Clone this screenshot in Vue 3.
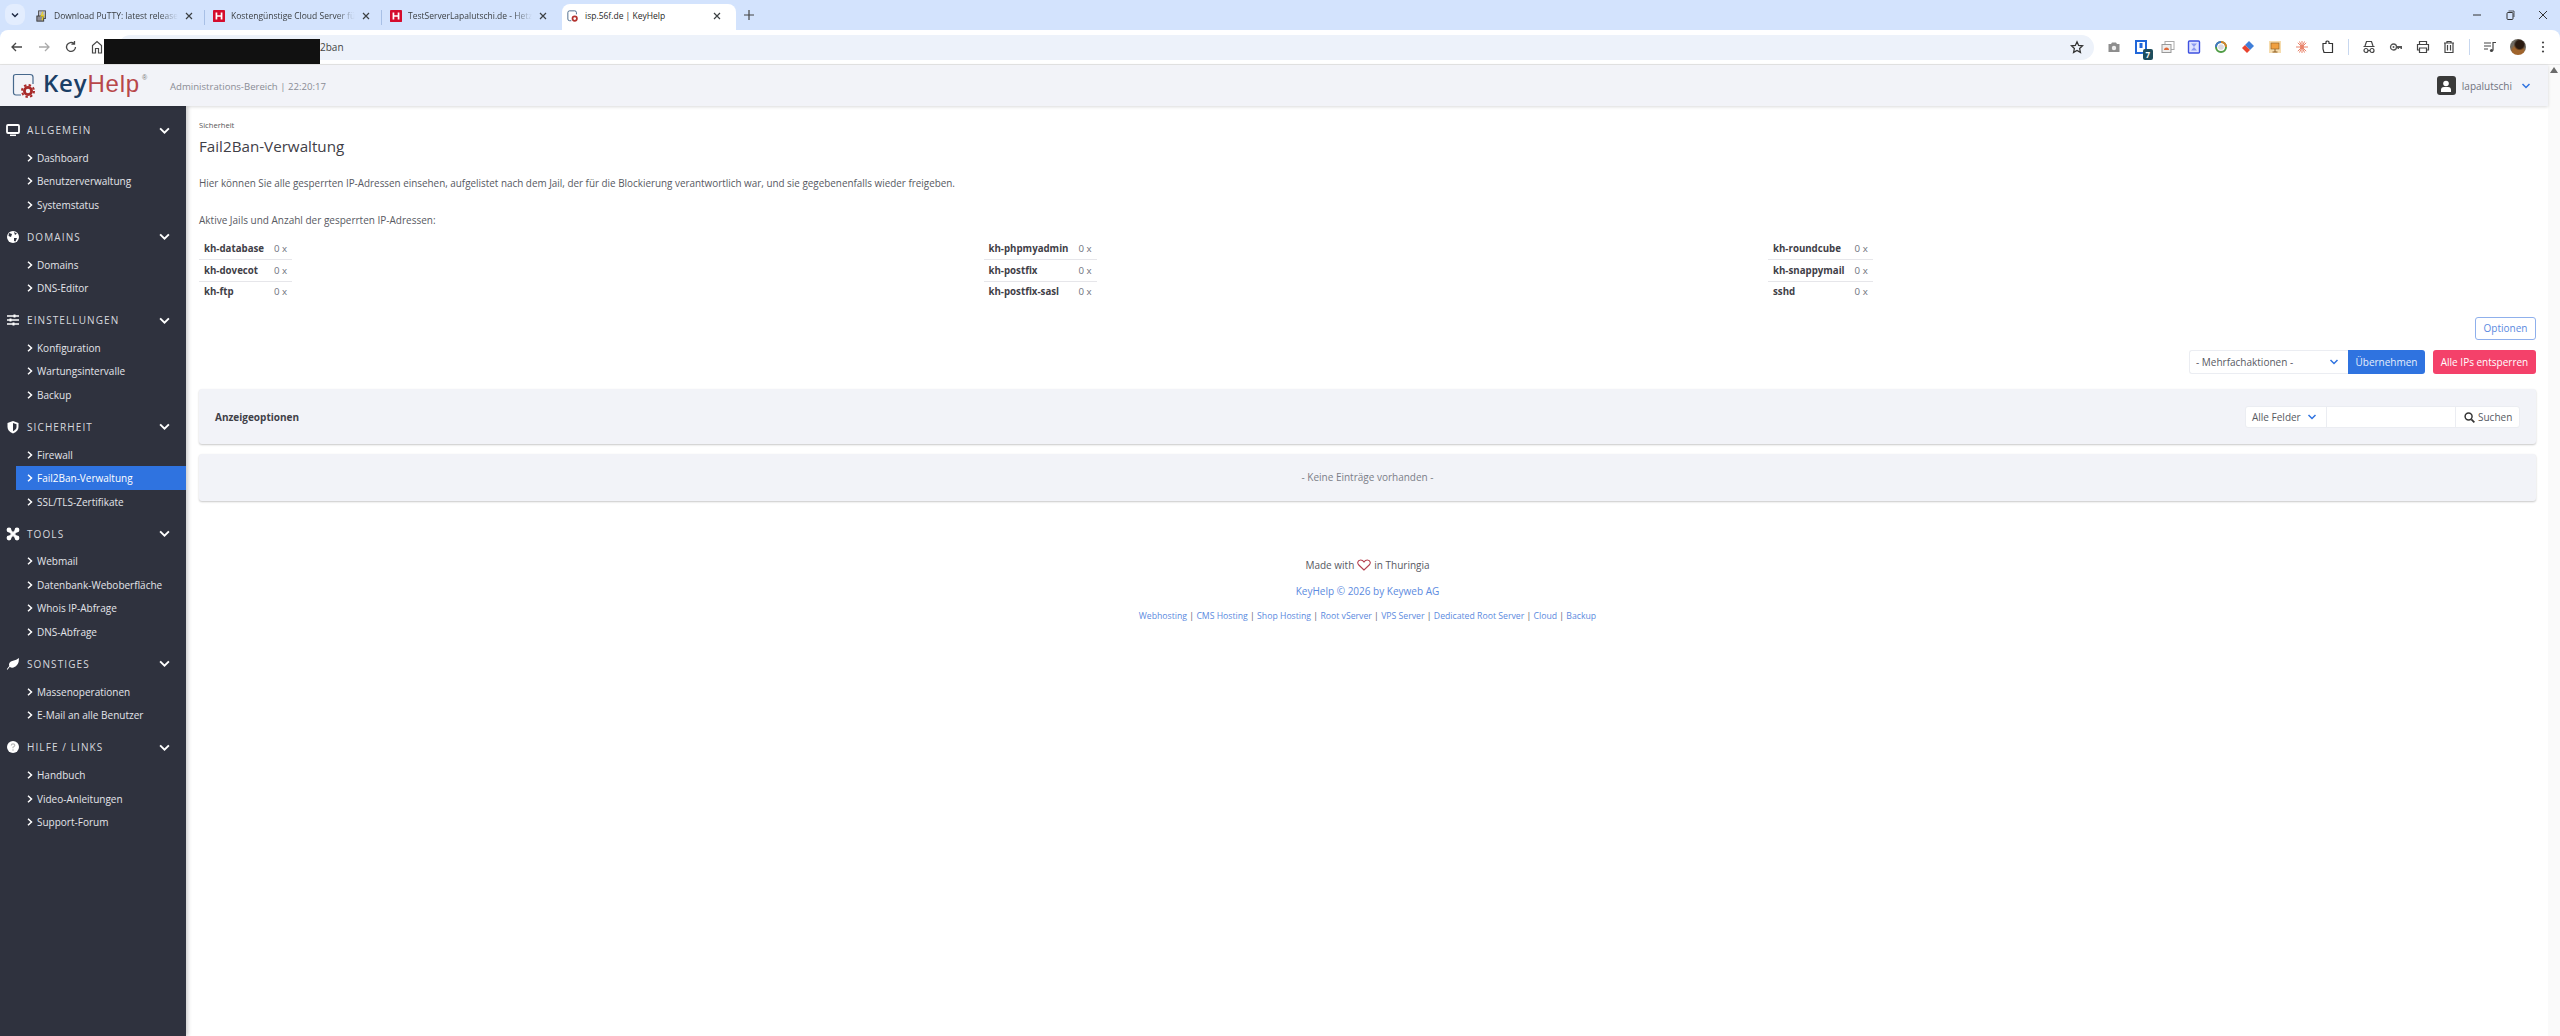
<template>
  <div class="page">
    <!-- browser chrome -->
    <div class="tabstrip">
      <div class="tab-search">
        <svg width="10" height="10" viewBox="0 0 10 10"><path d="M2 3.5 L5 6.5 L8 3.5" stroke="#1f2a44" stroke-width="1.5" fill="none"/></svg>
      </div>
      <div v-for="t in tabs" :key="t.title" class="tab" :class="{ active: t.active, sep: t.sep }">
        <svg v-if="t.icon === 'hetzner'" class="favicon" viewBox="0 0 14 14">
          <rect width="14" height="14" rx="1" fill="#d50c2d"/>
          <path d="M4 3 V11 M10 3 V11 M4 7 H10" stroke="#fff" stroke-width="2" fill="none"/>
        </svg>
        <svg v-else-if="t.icon === 'putty'" class="favicon" viewBox="0 0 14 14">
          <rect x="3" y="1" width="8" height="9" fill="#b9b9c4" stroke="#444"/>
          <rect x="1" y="7" width="8" height="6" fill="#8d8d98" stroke="#333"/>
          <path d="M8 2 L6 7 L9 6 L7 12" stroke="#e8d020" stroke-width="1.3" fill="none"/>
        </svg>
        <svg v-else class="favicon" viewBox="0 0 14 14">
          <path d="M5 12.5 H3 Q1 12.5 1 10.5 V3 Q1 1 3 1 H9 Q11 1 11 3 V5" stroke="#36597e" stroke-width="1" fill="none"/>
          <circle cx="9" cy="10" r="2.6" fill="none" stroke="#b3332f" stroke-width="2"/>
        </svg>
        <span class="tab-title">{{ t.title }}</span>
        <svg class="tab-close" width="10" height="10" viewBox="0 0 10 10"><path d="M2 2 L8 8 M8 2 L2 8" stroke="#3c4043" stroke-width="1.2"/></svg>
      </div>
      <svg class="tab-new" width="12" height="12" viewBox="0 0 12 12"><path d="M6 1 V11 M1 6 H11" stroke="#444" stroke-width="1.2"/></svg>
      <div class="window-btns">
        <svg width="10" height="10" viewBox="0 0 10 10"><path d="M1 5 H9" stroke="#333" stroke-width="1"/></svg>
        <svg width="10" height="10" viewBox="0 0 10 10"><rect x="2" y="2.5" width="6" height="7" rx="1" fill="none" stroke="#333"/><path d="M3.5 1 H9 V7" fill="none" stroke="#333" stroke-width=".8"/></svg>
        <svg width="10" height="10" viewBox="0 0 10 10"><path d="M1 1 L9 9 M9 1 L1 9" stroke="#333" stroke-width="1"/></svg>
      </div>
    </div>

    <div class="toolbar">
      <div class="nav-btns">
        <svg width="14" height="14" viewBox="0 0 14 14"><path d="M12 7 H2 M6 3 L2 7 L6 11" stroke="#474747" stroke-width="1.3" fill="none"/></svg>
        <svg width="14" height="14" viewBox="0 0 14 14"><path d="M2 7 H12 M8 3 L12 7 L8 11" stroke="#aaa" stroke-width="1.3" fill="none"/></svg>
        <svg width="14" height="14" viewBox="0 0 14 14"><path d="M11.5 7 A4.5 4.5 0 1 1 10 3.6 M10.5 1 V4.2 H7.4" stroke="#474747" stroke-width="1.3" fill="none"/></svg>
        <svg width="12" height="14" viewBox="0 0 12 14"><path d="M1.5 13 V5.5 L6 1.5 L10.5 5.5 V13 H7.5 V8.5 H4.5 V13 Z" stroke="#474747" stroke-width="1.2" fill="none"/></svg>
      </div>
      <div class="omnibox">
        <div class="redacted"></div>
        <span class="url">2ban</span>
        <svg class="star" width="14" height="14" viewBox="0 0 24 24"><path d="M12 3 L14.8 9.3 L21.5 10 L16.5 14.6 L17.9 21.3 L12 17.9 L6.1 21.3 L7.5 14.6 L2.5 10 L9.2 9.3 Z" stroke="#333" stroke-width="2.2" fill="none"/></svg>
      </div>
      <div class="ext-icons">
        <svg viewBox="0 0 14 14"><path d="M1.5 4 H4 L5 2.5 H9 L10 4 H12.5 V12 H1.5 Z" fill="#8d8d8d"/><circle cx="7" cy="8" r="2.2" fill="#eee"/></svg>
        <span class="ext-badge-wrap">
          <svg viewBox="0 0 14 14"><path d="M2 1 H12 V10 Q12 13 7 13 H2 Z" fill="none" stroke="#2167d9" stroke-width="2"/><rect x="5.5" y="3" width="3" height="5" fill="#2167d9"/></svg>
          <span class="ext-badge">7</span>
        </span>
        <svg viewBox="0 0 14 14"><rect x="4" y="1.5" width="9" height="8" fill="none" stroke="#aaa"/><rect x="1" y="4.5" width="9" height="8" fill="#eee" stroke="#999"/><path d="M3 10 A2.5 2.5 0 0 1 8 10 Z" fill="#e06a3b"/></svg>
        <svg viewBox="0 0 14 14"><rect x="1.5" y="1" width="11" height="12" rx="1" fill="#dfe3ff" stroke="#3f52e0" stroke-width="1.4"/><path d="M4 3.5 H10 L4 10.5 H10 Z" fill="#8c9af0"/></svg>
        <svg viewBox="0 0 14 14"><circle cx="7" cy="7" r="5" fill="none" stroke="#4f9c45" stroke-width="2"/><path d="M7 2 A5 5 0 0 1 12 7" fill="none" stroke="#d9822b" stroke-width="2"/><path d="M2 7 A5 5 0 0 1 7 2" fill="none" stroke="#3f74c9" stroke-width="2"/><circle cx="7" cy="7" r="2.8" fill="#d8d8e0"/></svg>
        <svg viewBox="0 0 14 14"><path d="M8 1 L13 6 L9 10 L4 5 Z" fill="#3f7ed8"/><path d="M4 5 L9 10 L6 13 L1 8 Z" fill="#e8432e"/></svg>
        <svg viewBox="0 0 14 14"><rect x="1" y="1" width="12" height="12" fill="#f6dcae"/><rect x="3" y="3" width="8" height="6" fill="#f0a040" stroke="#8a5a20" stroke-width=".6"/><path d="M7 9 V12 M4.5 12 H9.5" stroke="#8a5a20"/></svg>
        <svg viewBox="0 0 14 14"><g stroke="#e9836a" stroke-width="1"><path d="M7 1 V13 M1 7 H13 M2.8 2.8 L11.2 11.2 M11.2 2.8 L2.8 11.2 M4.5 1.5 L9.5 12.5 M9.5 1.5 L4.5 12.5"/></g><circle cx="7" cy="7" r="2" fill="#e9836a"/></svg>
        <svg viewBox="0 0 14 14"><path d="M2 3.5 H5 V2 Q5 1 6.5 1 Q8 1 8 2 V3.5 H11.5 V12.5 H3 L2 9 Z" fill="none" stroke="#333" stroke-width="1.2"/></svg>
        <i class="tb-sep"></i>
        <svg viewBox="0 0 14 14"><path d="M3 6 L4.5 1.5 H9.5 L11 6 M1.5 6.5 H12.5" stroke="#444" stroke-width="1.2" fill="none"/><circle cx="4" cy="10.5" r="2" fill="none" stroke="#444" stroke-width="1.2"/><circle cx="10" cy="10.5" r="2" fill="none" stroke="#444" stroke-width="1.2"/><path d="M6 10.5 H8" stroke="#444"/></svg>
        <svg viewBox="0 0 14 14"><circle cx="4.5" cy="7" r="3" fill="none" stroke="#555" stroke-width="1.3"/><circle cx="4.5" cy="7" r="1" fill="#555"/><path d="M7.5 6 H13 V9 H11.5 V8 H10 V9 H8.5 V8 H7.5 Z" fill="#555"/></svg>
        <svg viewBox="0 0 14 14"><path d="M3.5 4.5 V1.5 H10.5 V4.5 M3.5 10 H1.5 V4.5 H12.5 V10 H10.5 M3.5 8 H10.5 V12.5 H3.5 Z" fill="none" stroke="#444" stroke-width="1.2"/></svg>
        <svg viewBox="0 0 14 14"><path d="M2 3 H12 M5 3 V1.5 H9 V3 M3 3 V12.5 H11 V3 M5.5 5 V10.5 M8.5 5 V10.5" fill="none" stroke="#444" stroke-width="1.2"/></svg>
        <i class="tb-sep"></i>
        <svg viewBox="0 0 14 14"><path d="M1 3 H8 M1 6 H8 M1 9 H5" stroke="#444" stroke-width="1.2"/><path d="M10 10.5 V2.5 H13" stroke="#444" stroke-width="1.2" fill="none"/><circle cx="8.5" cy="10.5" r="1.6" fill="#444"/></svg>
        <span class="avatar"></span>
        <svg class="dots" viewBox="0 0 14 14"><circle cx="7" cy="2.5" r="1.1" fill="#444"/><circle cx="7" cy="7" r="1.1" fill="#444"/><circle cx="7" cy="11.5" r="1.1" fill="#444"/></svg>
      </div>
    </div>

    <!-- the page itself -->
    <div class="viewport">
      <div class="app">
        <header class="topbar">
          <div class="logo">
            <svg class="logo-mark" viewBox="0 0 24 25">
              <path d="M9 22 H4 Q1.5 22 1.5 19.5 V3.5 Q1.5 1.5 4 1.5 H18 Q21 1.5 21 4 V11" stroke="#46688c" stroke-width="1.2" fill="none"/>
              <circle cx="16" cy="18" r="3.6" fill="none" stroke="#a82a2a" stroke-width="2.8"/>
              <circle cx="16" cy="18" r="6" fill="none" stroke="#a82a2a" stroke-width="2" stroke-dasharray="2.4 2.3"/>
            </svg>
            <span class="logo-text"><span class="key">Key</span><span class="help">Help</span><sup>®</sup></span>
          </div>
          <span class="area">Administrations-Bereich | 22:20:17</span>
          <div class="user">
            <span class="user-icon">
              <svg width="12" height="12" viewBox="0 0 12 12"><circle cx="6" cy="3.5" r="2.8" fill="#fff"/><path d="M1 12 V10 Q1 7 4 7 H8 Q11 7 11 10 V12 Z" fill="#fff"/></svg>
            </span>
            <span class="user-name">lapalutschi</span>
            <svg width="10" height="10" viewBox="0 0 10 10"><path d="M1.5 3 L5 6.5 L8.5 3" stroke="#2f73e0" stroke-width="1.5" fill="none"/></svg>
          </div>
        </header>

        <div class="body">
          <nav class="sidebar">
            <section v-for="s in sections" :key="s.title" class="nav-section">
              <div class="nav-head">
                <svg class="nav-icon" viewBox="0 0 14 14" v-html="s.icon"></svg>
                <span class="nav-title">{{ s.title }}</span>
                <svg class="nav-caret" width="11" height="11" viewBox="0 0 10 10"><path d="M1 3 L5 7 L9 3" stroke="#fff" stroke-width="1.7" fill="none"/></svg>
              </div>
              <a v-for="item in s.items" :key="item" class="nav-item" :class="{ active: item === 'Fail2Ban-Verwaltung' }">
                <svg width="6" height="8" viewBox="0 0 6 8"><path d="M1 .8 L4.5 4 L1 7.2" stroke="#fff" stroke-width="1.5" fill="none"/></svg>
                {{ item }}
              </a>
            </section>
          </nav>

          <main class="content">
            <div class="crumb">Sicherheit</div>
            <h1>Fail2Ban-Verwaltung</h1>
            <p class="intro">Hier können Sie alle gesperrten IP-Adressen einsehen, aufgelistet nach dem Jail, der für die Blockierung verantwortlich war, und sie gegebenenfalls wieder freigeben.</p>
            <p class="jails-label">Aktive Jails und Anzahl der gesperrten IP-Adressen:</p>

            <div class="jails">
              <table v-for="(col, i) in jails" :key="i" class="jail-table">
                <tr v-for="j in col" :key="j">
                  <th>{{ j }}</th>
                  <td>0 x</td>
                </tr>
              </table>
            </div>

            <div class="actions-top">
              <button class="btn btn-outline">Optionen</button>
            </div>
            <div class="actions">
              <div class="bulk">
                <span class="bulk-select">
                  - Mehrfachaktionen -
                  <svg width="10" height="10" viewBox="0 0 10 10"><path d="M1.5 3 L5 6.5 L8.5 3" stroke="#2f73e0" stroke-width="1.5" fill="none"/></svg>
                </span>
                <button class="btn btn-blue">Übernehmen</button>
              </div>
              <button class="btn btn-red">Alle IPs entsperren</button>
            </div>

            <div class="panel panel-options">
              <strong>Anzeigeoptionen</strong>
              <div class="search">
                <span class="search-field">
                  Alle Felder
                  <svg width="10" height="10" viewBox="0 0 10 10"><path d="M1.5 3 L5 6.5 L8.5 3" stroke="#2f73e0" stroke-width="1.5" fill="none"/></svg>
                </span>
                <span class="search-input"></span>
                <span class="search-btn">
                  <svg width="11" height="11" viewBox="0 0 12 12"><circle cx="5" cy="5" r="3.8" fill="none" stroke="#333" stroke-width="1.6"/><path d="M8 8 L11.3 11.3" stroke="#333" stroke-width="1.9"/></svg>
                  Suchen
                </span>
              </div>
            </div>
            <div class="panel panel-empty">- Keine Einträge vorhanden -</div>

            <footer class="foot">
              <div class="made">
                Made with
                <svg width="14" height="12" viewBox="0 0 14 12"><path d="M7 11 L1.8 6 Q.5 4.7 .8 3.2 Q1.3 1 3.6 1 Q5.8 1 7 3 Q8.2 1 10.4 1 Q12.7 1 13.2 3.2 Q13.5 4.7 12.2 6 Z" fill="none" stroke="#b5404f" stroke-width="1.1"/></svg>
                in Thuringia
              </div>
              <div class="copy">KeyHelp © 2026 by Keyweb AG</div>
              <div class="links">
                <template v-for="(l, i) in links" :key="l"><span v-if="i" class="pipe"> | </span><a>{{ l }}</a></template>
              </div>
            </footer>
          </main>
        </div>
      </div>

      <div class="scrollbar">
        <svg width="8" height="6" viewBox="0 0 8 6"><path d="M4 0 L8 6 H0 Z" fill="#6b6b6b"/></svg>
      </div>
    </div>
  </div>
</template>

<script setup>
const tabs = [
  { title: 'Download PuTTY: latest release', icon: 'putty', sep: true },
  { title: 'Kostengünstige Cloud Server für', icon: 'hetzner', sep: true },
  { title: 'TestServerLapalutschi.de - Hetzner', icon: 'hetzner' },
  { title: 'isp.56f.de | KeyHelp', icon: 'keyhelp', active: true }
]

const sections = [
  {
    title: 'ALLGEMEIN',
    icon: '<rect x="1" y="2" width="12" height="8" rx="1" fill="none" stroke="#fff" stroke-width="1.8"/><path d="M4 12.3 H10" stroke="#fff" stroke-width="1.5"/>',
    items: ['Dashboard', 'Benutzerverwaltung', 'Systemstatus']
  },
  {
    title: 'DOMAINS',
    icon: '<circle cx="7" cy="7" r="6" fill="#fff"/><path d="M3 3 L6 4 L5 7 L2.5 6 Z M8 8 L11 8 L9.5 11.5 L8 11 Z M8 2 L11 3.5 L9 5 Z" fill="#2f323e"/>',
    items: ['Domains', 'DNS-Editor']
  },
  {
    title: 'EINSTELLUNGEN',
    icon: '<path d="M1 3 H13 M1 7 H13 M1 11 H13" stroke="#fff" stroke-width="1.5"/><rect x="7.5" y="1.5" width="2" height="3" fill="#fff"/><rect x="3.5" y="5.5" width="2" height="3" fill="#fff"/><rect x="6.5" y="9.5" width="2" height="3" fill="#fff"/>',
    items: ['Konfiguration', 'Wartungsintervalle', 'Backup']
  },
  {
    title: 'SICHERHEIT',
    icon: '<path d="M7 1 L12.5 3 V7 Q12.5 11 7 13.5 Q1.5 11 1.5 7 V3 Z" fill="#fff"/><path d="M7 3 L10.5 4.3 V7 Q10.5 9.5 7 11.3 Z" fill="#2f323e"/>',
    items: ['Firewall', 'Fail2Ban-Verwaltung', 'SSL/TLS-Zertifikate']
  },
  {
    title: 'TOOLS',
    icon: '<path d="M2 3.5 L3.5 2 L7 5.5 L10.5 2 L12 3.5 L8.5 7 L12 10.5 L10.5 12 L7 8.5 L3.5 12 L2 10.5 L5.5 7 Z" fill="#fff" stroke="#fff"/><circle cx="3" cy="3" r="2.4" fill="#fff"/><circle cx="11" cy="3" r="2.4" fill="#fff"/><circle cx="3" cy="11" r="2.4" fill="#fff"/><circle cx="11" cy="11" r="2.4" fill="#fff"/>',
    items: ['Webmail', 'Datenbank-Weboberfläche', 'Whois IP-Abfrage', 'DNS-Abfrage']
  },
  {
    title: 'SONSTIGES',
    icon: '<path d="M13 1 Q13 9 7.5 10.5 Q5 11 3.8 9.8 L1.5 12.8 L.8 12.2 L3.2 9 Q2 5 7 3.8 Q10.5 3 13 1 Z" fill="#fff"/>',
    items: ['Massenoperationen', 'E-Mail an alle Benutzer']
  },
  {
    title: 'HILFE / LINKS',
    icon: '<circle cx="7" cy="7" r="6" fill="#fff"/><path d="M5.3 5.5 Q5.3 3.8 7 3.8 Q8.8 3.8 8.8 5.3 Q8.8 6.3 7 7.3 V8.3" stroke="#bbb" stroke-width="1.2" fill="none"/><circle cx="7" cy="10" r=".8" fill="#bbb"/>',
    items: ['Handbuch', 'Video-Anleitungen', 'Support-Forum']
  }
]

const jails = [
  ['kh-database', 'kh-dovecot', 'kh-ftp'],
  ['kh-phpmyadmin', 'kh-postfix', 'kh-postfix-sasl'],
  ['kh-roundcube', 'kh-snappymail', 'sshd']
]

const links = ['Webhosting', 'CMS Hosting', 'Shop Hosting', 'Root vServer', 'VPS Server', 'Dedicated Root Server', 'Cloud', 'Backup']
</script>

<style>
html, body {
  margin: 0;
  height: 100%;
  overflow: hidden;
}
</style>

<style scoped>
.page {
  width: 2560px;
  height: 1036px;
  display: flex;
  flex-direction: column;
  font-family: "Open Sans", "Liberation Sans", sans-serif;
  font-size: 10px;
  color: #575962;
  overflow: hidden;
  background: #d3e3fd;
}

/* tab strip */
.tabstrip {
  height: 30px;
  padding: 4px 0 0 5px;
  box-sizing: border-box;
  display: flex;
  align-items: stretch;
  flex-shrink: 0;
}

.tab-search {
  width: 20px;
  height: 21px;
  margin-right: 6px;
  border-radius: 8px;
  background: #e3edfe;
  display: flex;
  align-items: center;
  justify-content: center;
}

.tab {
  width: 177px;
  display: flex;
  align-items: center;
  gap: 6px;
  box-sizing: border-box;
  padding: 0 14px 3px 5px;
  font-size: 8.5px;
  color: #3c4043;
  white-space: nowrap;
  position: relative;
}

.tab.sep::after {
  content: "";
  position: absolute;
  right: 3px;
  top: 6px;
  height: 15px;
  width: 1px;
  background: #a8c0e6;
}

.tab.active {
  background: #fff;
  border-radius: 8px 8px 0 0;
  color: #1f1f1f;
  width: 174px;
}

.favicon {
  width: 12px;
  height: 12px;
  flex-shrink: 0;
}

.tab-title {
  flex: 1;
  overflow: hidden;
  -webkit-mask-image: linear-gradient(to right, #000 85%, transparent);
  mask-image: linear-gradient(to right, #000 85%, transparent);
}

.tab.active .tab-title {
  -webkit-mask-image: none;
  mask-image: none;
}

.tab-close {
  flex-shrink: 0;
}

.tab-new {
  margin: 5px 0 0 7px;
}

.window-btns {
  margin-left: auto;
  width: 100px;
  display: flex;
  justify-content: space-around;
  padding: 6px 0 0 0;
}

/* toolbar */
.toolbar {
  height: 34px;
  background: #fff;
  border-radius: 8px 8px 0 0;
  display: flex;
  align-items: center;
  flex-shrink: 0;
}

.nav-btns {
  display: flex;
  align-items: center;
  gap: 13px;
  padding-left: 10px;
  width: 118px;
  box-sizing: border-box;
}

.omnibox {
  width: 1976px;
  height: 25px;
  background: #edf2fa;
  border-radius: 13px;
  display: flex;
  align-items: center;
  position: relative;
}

.redacted {
  position: absolute;
  left: -14px;
  top: 4px;
  width: 216px;
  height: 25px;
  background: #111;
}

.url {
  margin-left: 202px;
  color: #444;
}

.star {
  margin-left: auto;
  margin-right: 10px;
}

.ext-icons {
  display: flex;
  align-items: center;
  padding-left: 13px;
  gap: 12.8px;
}

.ext-icons > svg,
.ext-badge-wrap svg {
  width: 14px;
  height: 14px;
  display: block;
}

.ext-badge-wrap {
  position: relative;
}

.ext-badge {
  position: absolute;
  right: -5px;
  bottom: -6px;
  width: 10px;
  height: 11px;
  background: #1e4d5c;
  color: #fff;
  border-radius: 2px;
  font-size: 8px;
  font-weight: 700;
  line-height: 11px;
  text-align: center;
}

.tb-sep {
  width: 1px;
  height: 16px;
  background: #c7d7ef;
}

.avatar {
  width: 16px;
  height: 16px;
  border-radius: 50%;
  background:
    radial-gradient(circle at 60% 35%, #2a1a10 0 28%, transparent 42%),
    radial-gradient(circle at 50% 80%, #a0642c 0 35%, transparent 55%),
    #6e6a62;
}

.ext-icons > svg.dots {
  margin-left: -3px;
}

/* page */
.viewport {
  flex: 1;
  display: flex;
  background: #fff;
  min-height: 0;
  border-top: 1px solid #e6e6e6;
}

.app {
  flex: 1;
  display: flex;
  flex-direction: column;
  min-width: 0;
}

.topbar {
  height: 41px;
  background: #f2f3f8;
  box-shadow: 0 1px 3px rgba(0, 0, 0, 0.15);
  display: flex;
  align-items: center;
  padding: 0 17px 0 12px;
  position: relative;
  z-index: 2;
}

.logo {
  display: flex;
  align-items: center;
  width: 158px;
  flex-shrink: 0;
}

.logo-mark {
  width: 24px;
  height: 25px;
  flex-shrink: 0;
}

.logo-text {
  margin: 0 0 4px 7px;
  font-family: "Liberation Sans", sans-serif;
  font-size: 24px;
  line-height: 28px;
  letter-spacing: 0.8px;
  white-space: nowrap;
}

.logo-text sup {
  font-size: 7px;
  color: #777;
  vertical-align: 12px;
  line-height: 0;
  letter-spacing: 0;
  margin-left: 2px;
}

.key {
  font-family: "Open Sans", sans-serif;
  font-size: 24px;
  color: #1b3f66;
  font-weight: 600;
}

.help {
  color: #b8474a;
}

.area {
  font-size: 9.6px;
  color: #8a8c95;
  margin-top: 2px;
}

.user {
  margin-left: auto;
  display: flex;
  align-items: center;
  color: #6f727d;
}

.user-icon {
  width: 19px;
  height: 19px;
  border-radius: 3px;
  background: #3a3a3a;
  display: flex;
  align-items: center;
  justify-content: center;
  margin-right: 6px;
}

.user-name {
  margin-right: 9px;
}

.body {
  flex: 1;
  display: flex;
  min-height: 0;
}

.sidebar {
  width: 186px;
  flex-shrink: 0;
  background: #2f323e;
  box-shadow: 2px 0 4px rgba(0, 0, 0, 0.2);
  padding-top: 12px;
  box-sizing: border-box;
  position: relative;
  z-index: 1;
}

.nav-section {
  margin-bottom: 8.3px;
}

.nav-head {
  height: 24px;
  margin-bottom: 4px;
  display: flex;
  align-items: center;
  padding-left: 6px;
}

.nav-icon {
  width: 14px;
  height: 14px;
  flex-shrink: 0;
}

.nav-title {
  margin-left: 7px;
  letter-spacing: 1.1px;
  color: #d8d9de;
}

.nav-caret {
  margin-left: auto;
  margin-right: 16px;
}

.nav-item {
  height: 23.5px;
  margin-left: 16px;
  padding-left: 11px;
  display: flex;
  align-items: center;
  gap: 4px;
  color: #e4e5ea;
}

.nav-item.active {
  background: #2f73e0;
  color: #fff;
}

.content {
  flex: 1;
  min-width: 0;
  padding: 13px 12px 0 13px;
}

.crumb {
  font-size: 7.6px;
  line-height: 12px;
  color: #555;
}

h1 {
  margin: 3px 0 0;
  font-size: 15.2px;
  font-weight: 400;
  line-height: 24px;
  color: #3f4047;
}

.intro {
  margin: 17px 0 0;
  font-size: 9.88px;
  line-height: 16px;
}

.jails-label {
  margin: 21px 0 0;
  line-height: 16px;
}

.jails {
  margin-top: 10.5px;
  display: grid;
  grid-template-columns: repeat(3, 784.5px);
}

.jail-table {
  border-collapse: collapse;
  font-size: 9.7px;
  justify-self: start;
}

.jail-table tr + tr {
  border-top: 1px solid #e6e6ea;
}

.jail-table th {
  text-align: left;
  font-weight: 700;
  color: #3f4047;
  padding: 0 10px 0 5px;
  height: 20.6px;
}

.jail-table td {
  padding: 0 5px 0 0;
  color: #6f727d;
}

.actions-top {
  display: flex;
  justify-content: flex-end;
  margin-top: 14.5px;
}

.btn {
  font: inherit;
  height: 24px;
  padding: 0;
  border-radius: 3px;
  cursor: pointer;
  box-sizing: border-box;
}

.btn-outline {
  width: 61px;
  height: 23px;
  background: #fff;
  color: #5b8ae0;
  border: 1px solid #8fb0ec;
}

.actions {
  margin-top: 10px;
  display: flex;
  justify-content: flex-end;
  gap: 8px;
}

.bulk {
  display: flex;
}

.bulk-select {
  width: 159px;
  height: 24px;
  box-sizing: border-box;
  border: 1px solid #ebedf2;
  border-right: 0;
  border-radius: 3px 0 0 3px;
  padding: 0 9px 0 6px;
  display: flex;
  align-items: center;
  justify-content: space-between;
}

.btn-blue {
  width: 77px;
  background: #2f73e0;
  color: #e6eefb;
  border: 0;
  border-radius: 0 3px 3px 0;
}

.btn-red {
  width: 103px;
  background: #f4416a;
  color: #fff;
  border: 0;
}

.panel {
  background: #f2f3f8;
  border-radius: 3px;
  box-shadow: 0 1px 2px rgba(0, 0, 0, 0.22);
  box-sizing: border-box;
}

.panel-options {
  margin-top: 15px;
  height: 55px;
  display: flex;
  align-items: center;
  justify-content: space-between;
  padding: 2px 16px 0;
}

.panel-options strong {
  color: #3f4047;
}

.search {
  display: flex;
  height: 22px;
  background: #fff;
  border: 1px solid #ebedf2;
  border-radius: 3px;
  box-sizing: border-box;
  width: 275px;
}

.search > span {
  display: flex;
  align-items: center;
}

.search-field {
  width: 81px;
  box-sizing: border-box;
  padding: 0 9px 0 6px;
  justify-content: space-between;
  border-right: 1px solid #ebedf2;
}

.search-input {
  flex: 1;
  border-right: 1px solid #ebedf2;
}

.search-btn {
  width: 63px;
  box-sizing: border-box;
  padding-left: 8px;
  gap: 3px;
}

.panel-empty {
  margin-top: 10px;
  height: 47px;
  display: flex;
  align-items: center;
  justify-content: center;
  color: #7b7e88;
}

.foot {
  text-align: center;
  margin-top: 54px;
}

.made {
  display: flex;
  justify-content: center;
  align-items: center;
  gap: 3px;
  line-height: 20px;
}

.copy {
  margin-top: 6px;
  line-height: 20px;
  color: #5b8ae0;
}

.links {
  margin-top: 5px;
  line-height: 20px;
  font-size: 8.7px;
  color: #5b8ae0;
}

.pipe {
  color: #575962;
}

.scrollbar {
  width: 12px;
  flex-shrink: 0;
  background: #fafafa;
  display: flex;
  justify-content: center;
  align-items: flex-start;
  padding-top: 2px;
  box-sizing: border-box;
}
</style>
